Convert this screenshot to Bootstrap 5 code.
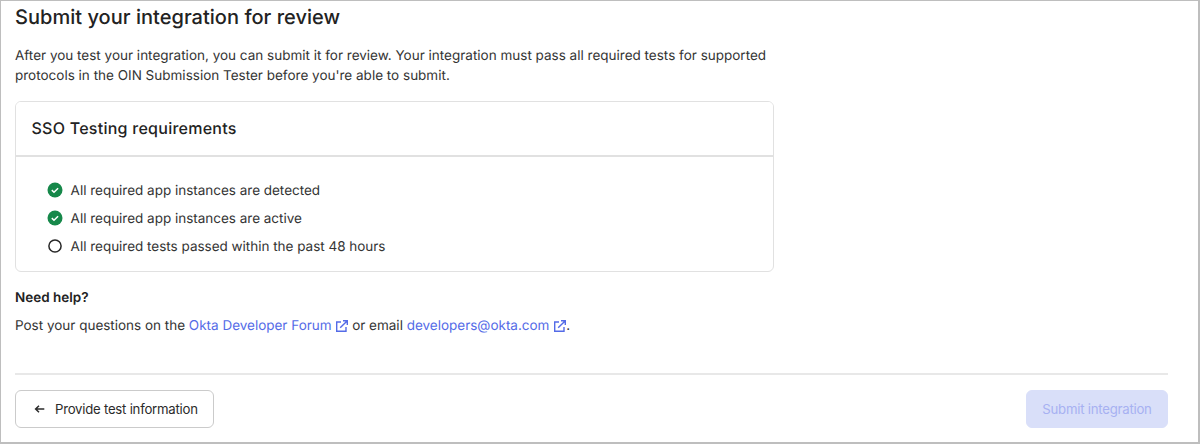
<!DOCTYPE html>
<html lang="en">
<head>
<meta charset="utf-8">
<meta name="viewport" content="width=device-width, initial-scale=1">
<title>Submit your integration for review</title>
<link href="https://cdn.jsdelivr.net/npm/bootstrap@5.3.0/dist/css/bootstrap.min.css" rel="stylesheet">
<style>
  body { font-family: Inter, "Liberation Sans", sans-serif; font-size: 13.5px; line-height: 20px; color: #343434; background: #fff; text-rendering: geometricPrecision; }
  .page-frame { height: 444px; border: 2px solid #bebebe; border-width: 1px 2px 2px 1px; padding: 4px 30px 0 14px; overflow: hidden; }
  .page-title { font-size: 20px; line-height: 24px; font-weight: 500; color: #222; letter-spacing: .03px; margin-bottom: 17px; }
  .intro { width: 759px; margin-bottom: 15px; white-space: nowrap; }
  .req-card { width: 759px; height: 171px; border: 1px solid #e1e1e1; border-radius: 6px; }
  .req-card .card-header { height: 55px; padding: 14px 15.5px 0; background: #fff; border-bottom: 2px solid #e1e1e1; }
  .req-title { font-size: 16px; line-height: 24px; font-weight: 500; color: #222; margin: 0; letter-spacing: .26px; }
  .req-card .card-body { padding: 24px 31px 0; }
  .req-list { gap: 8px; letter-spacing: -.015px; }
  .req-list li { height: 20px; }
  .req-list svg { margin-bottom: 3px; }
  .req-list span { margin-left: -.4px; }
  .help-title { font-size: 13.5px; line-height: 20px; font-weight: 600; color: #222; margin: 16px 0 8px; }
  .help-text { letter-spacing: -.01px; }
  .help-link { color: #546be7; text-decoration: none; }
  .ext-icon { width: 14px; height: 14px; vertical-align: -2.5px; margin: 0 -1px 0 0; }
  .rule { border-top: 2px solid #e8e8e8; margin: 37px 0 15px; }
  .wizard-btn { height: 38px; border-radius: 6px; font-size: 13.2px; letter-spacing: -.24px; line-height: 20px; padding: 0 15px; white-space: nowrap; }
  .btn-back { width: 199px; color: #2b2b2b; border: 1px solid #cbcbcb; background: #fff; }
  .btn-send, .btn-send:disabled { width: 142px; color: #a7b1f2; background: #d9dff9; border-color: #d9dff9; opacity: 1; }
</style>
</head>
<body>
<main class="page-frame">
  <h1 class="page-title">Submit your integration for review</h1>
  <p class="intro">After you test your integration, you can submit it for review. Your integration must pass all required tests for supported<br>protocols in the OIN Submission Tester before you're able to submit.</p>

  <section class="card req-card">
    <div class="card-header"><h2 class="req-title">SSO Testing requirements</h2></div>
    <div class="card-body">
      <ul class="list-unstyled d-flex flex-column mb-0 req-list">
        <li class="d-flex align-items-center gap-2">
          <svg width="16" height="16" viewBox="0 0 16 16" aria-hidden="true"><circle cx="8" cy="8" r="7.5" fill="#16884a"/><path d="M4.8 8.1 7 10.2l4.1-4" fill="none" stroke="#fff" stroke-width="1.5"/></svg>
          <span>All required app instances are detected</span>
        </li>
        <li class="d-flex align-items-center gap-2">
          <svg width="16" height="16" viewBox="0 0 16 16" aria-hidden="true"><circle cx="8" cy="8" r="7.5" fill="#16884a"/><path d="M4.8 8.1 7 10.2l4.1-4" fill="none" stroke="#fff" stroke-width="1.5"/></svg>
          <span>All required app instances are active</span>
        </li>
        <li class="d-flex align-items-center gap-2">
          <svg width="16" height="16" viewBox="0 0 16 16" aria-hidden="true"><circle cx="8" cy="8" r="6.1" fill="none" stroke="#272727" stroke-width="1.5"/></svg>
          <span>All required tests passed within the past 48 hours</span>
        </li>
      </ul>
    </div>
  </section>

  <h3 class="help-title">Need help?</h3>
  <p class="help-text mb-0">Post your questions on the <a class="help-link" href="#">Okta Developer Forum <svg class="ext-icon" viewBox="0 0 14 14" fill="none" stroke="currentColor" stroke-width="1.4" aria-hidden="true"><path d="M6 3H1.7v9.3H11V8M8 1.7h4.3V6M12.3 1.7 5.2 8.8"/></svg></a> or email <a class="help-link" href="#">developers@okta.com <svg class="ext-icon" viewBox="0 0 14 14" fill="none" stroke="currentColor" stroke-width="1.4" aria-hidden="true"><path d="M6 3H1.7v9.3H11V8M8 1.7h4.3V6M12.3 1.7 5.2 8.8"/></svg></a>.</p>

  <div class="rule"></div>
  <div class="d-flex justify-content-between">
    <button class="btn wizard-btn btn-back d-flex align-items-center" type="button">
      <svg class="me-2 flex-shrink-0" width="16" height="16" viewBox="0 0 16 16" fill="none" stroke="currentColor" stroke-width="1.5" aria-hidden="true"><path d="M13.3 8H4.9M8 4.7 4.6 8 8 11.3"/></svg>
      <span>Provide test information</span>
    </button>
    <button class="btn wizard-btn btn-send" type="button" disabled>Submit integration</button>
  </div>
</main>
<script src="https://cdn.jsdelivr.net/npm/bootstrap@5.3.0/dist/js/bootstrap.bundle.min.js"></script>
</body>
</html>
